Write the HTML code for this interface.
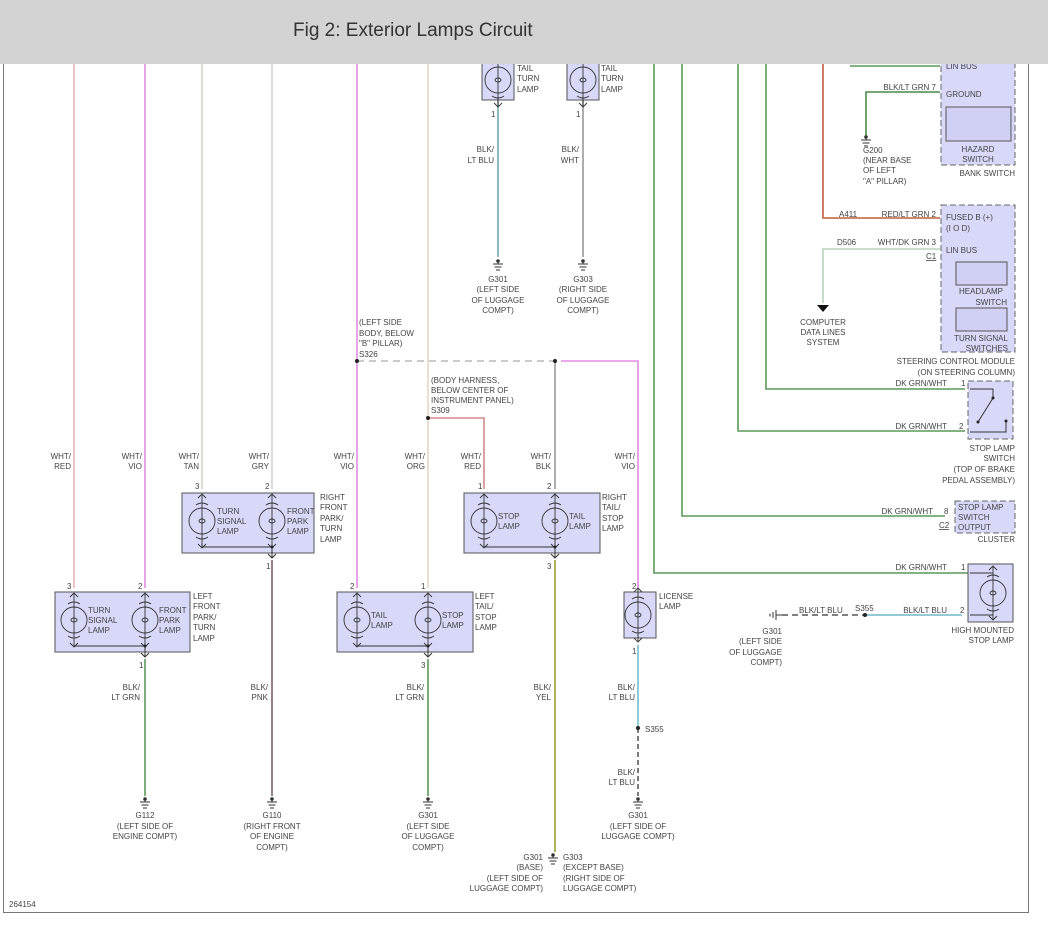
<!DOCTYPE html>
<html><head><meta charset="utf-8"><style>
html,body{margin:0;padding:0;background:#fff;}
svg{display:block;}
text{font-family:"Liberation Sans",sans-serif;font-size:8px;fill:#444;}
.r{text-anchor:end;}.c{text-anchor:middle;}
</style></head><body>
<svg width="1048" height="932" viewBox="0 0 1048 932" xmlns="http://www.w3.org/2000/svg">
<defs>
<g id="lamp" fill="none" stroke="#333" stroke-width="0.9">
<circle r="13"/>
<path d="M0,-27V27M-4,-23L0,-27L4,-23M-4,23L0,27L4,23M-6,-16Q0,-20 6,-16M-6,16Q0,20 6,16"/>
<ellipse rx="3" ry="2"/>
</g>
<g id="gnd" stroke="#333" stroke-width="1"><path d="M-5,0H5M-3.5,3H3.5M-2,6H2M0,-4V0"/><circle cy="-3" r="1.3" fill="#333"/></g>
</defs>
<rect width="1048" height="932" fill="#fff"/>
<!-- border -->
<path d="M3.5,60V912.5H1028.5V60" fill="none" stroke="#777" stroke-width="1"/>

<!-- vertical wires left -->
<g fill="none" stroke-width="1.6">
<path d="M74,60V588" stroke="#e8b8b8"/>
<path d="M145,60V588" stroke="#e08ee0"/>
<path d="M202,60V489" stroke="#d8d2cc"/>
<path d="M272,60V489" stroke="#d4d4d4"/>
<path d="M357,60V588" stroke="#e08ee0"/>
<path d="M428,60V588" stroke="#e6d6c6"/>
<path d="M498,100V257" stroke="#6fa8b0"/>
<path d="M583,100V257" stroke="#999"/>
<path d="M654,60V573H968" stroke="#5a9a5a"/>
<path d="M682,60V516H945" stroke="#5a9a5a"/>
<path d="M738,60V431H965" stroke="#5a9a5a"/>
<path d="M766,60V389H965" stroke="#5a9a5a"/>
<path d="M823,60V218H940" stroke="#c0603a"/>
<path d="M850,66H940" stroke="#5a9a5a"/>
<path d="M940,92H866V136" stroke="#4a8a4a"/>
<path d="M940,249H823V303" stroke="#b8d4b8"/>
<path d="M555,361V489" stroke="#999"/>
<path d="M428,418H484V489" stroke="#d08a8a"/>
<path d="M561,361H638V589" stroke="#e08ee0"/>
<path d="M272,560V796" stroke="#806070"/>
<path d="M555,560V852" stroke="#a0a030"/>
<path d="M145,659V796" stroke="#5a9a5a"/>
<path d="M428,659V796" stroke="#5a9a5a"/>
<path d="M638,645V728" stroke="#6fc0d0"/>
<path d="M865,615H962" stroke="#6fb8c8"/>
</g>
<path d="M357,361H555" stroke="#aaa" stroke-width="1.2" stroke-dasharray="7,5"/>
<path d="M638,728V796" stroke="#444" stroke-width="1.4" stroke-dasharray="5,3"/>
<path d="M782,615H865" stroke="#555" stroke-width="1.4" stroke-dasharray="6,4"/>
<g fill="#222"><circle cx="357" cy="361" r="2"/><circle cx="555" cy="361" r="2"/><circle cx="428" cy="418" r="2"/><circle cx="638" cy="728" r="2"/><circle cx="865" cy="615" r="2"/></g>
<path d="M817,305H829L823,312Z" fill="#111"/>
<!-- G301 horizontal ground -->
<g stroke="#333"><path d="M776,610V620M773,612V618M770,613.5V616.5M776,615H782"/></g>

<!-- top lamp boxes -->
<rect x="482" y="55" width="32" height="45" fill="#d8d8f8" stroke="#555"/>
<rect x="567" y="55" width="32" height="45" fill="#d8d8f8" stroke="#555"/>
<use href="#lamp" x="498" y="80"/><use href="#lamp" x="583" y="80"/>

<!-- right front box -->
<rect x="182" y="493" width="132" height="60" fill="#d8d8f8" stroke="#555"/>
<use href="#lamp" x="202" y="521"/><use href="#lamp" x="272" y="521"/>
<path d="M202,544V547H272M272,544V558M268,554L272,558L276,554" fill="none" stroke="#333"/><circle cx="272" cy="547" r="1.5" fill="#222"/>
<!-- right tail stop -->
<rect x="464" y="493" width="136" height="60" fill="#d8d8f8" stroke="#555"/>
<use href="#lamp" x="484" y="521"/><use href="#lamp" x="555" y="521"/>
<path d="M484,544V547H555M555,544V558M551,554L555,558L559,554" fill="none" stroke="#333"/><circle cx="555" cy="547" r="1.5" fill="#222"/>
<!-- left front -->
<rect x="55" y="592" width="135" height="60" fill="#d8d8f8" stroke="#555"/>
<use href="#lamp" x="74" y="620"/><use href="#lamp" x="145" y="620"/>
<path d="M74,643V646H145M145,643V657M141,653L145,657L149,653" fill="none" stroke="#333"/><circle cx="145" cy="646" r="1.5" fill="#222"/>
<!-- left tail stop -->
<rect x="337" y="592" width="136" height="60" fill="#d8d8f8" stroke="#555"/>
<use href="#lamp" x="357" y="620"/><use href="#lamp" x="428" y="620"/>
<path d="M357,643V646H428M428,643V657M424,653L428,657L432,653" fill="none" stroke="#333"/><circle cx="428" cy="646" r="1.5" fill="#222"/>
<!-- license -->
<rect x="624" y="592" width="32" height="46" fill="#d8d8f8" stroke="#555"/>
<use href="#lamp" x="638" y="615"/>

<!-- right side modules -->
<rect x="941" y="55" width="74" height="110" fill="#d8d8f8" stroke="#666" stroke-dasharray="6,3"/>
<rect x="946" y="107" width="65" height="34" fill="#d0d0f4" stroke="#555"/>
<rect x="941" y="205" width="74" height="147" fill="#d8d8f8" stroke="#666" stroke-dasharray="6,3"/>
<rect x="956" y="262" width="51" height="23" fill="#d0d0f4" stroke="#555"/>
<rect x="956" y="308" width="51" height="23" fill="#d0d0f4" stroke="#555"/>
<rect x="968" y="381" width="45" height="58" fill="#d8d8f8" stroke="#666" stroke-dasharray="6,3"/>
<path d="M970,389H993V398L978,422M1006,421V432H970" fill="none" stroke="#333"/><circle cx="978" cy="422" r="1.5" fill="#222"/><circle cx="1006" cy="421" r="1.5" fill="#222"/><circle cx="993" cy="398" r="1.5" fill="#222"/>
<rect x="955" y="501" width="60" height="32" fill="#d8d8f8" stroke="#666" stroke-dasharray="6,3"/>
<rect x="968" y="564" width="45" height="58" fill="#d8d8f8" stroke="#555"/>
<use href="#lamp" x="993" y="593"/>
<path d="M970,573H993M970,615H993" fill="none" stroke="#333"/>

<!-- grounds -->
<use href="#gnd" x="498" y="264"/><use href="#gnd" x="583" y="264"/><use href="#gnd" x="866" y="140"/>
<use href="#gnd" x="145" y="802"/><use href="#gnd" x="272" y="802"/><use href="#gnd" x="428" y="802"/><use href="#gnd" x="638" y="802"/><use href="#gnd" x="553" y="858"/>

<!-- text -->
<text x="517" y="71">TAIL</text><text x="517" y="81">TURN</text><text x="517" y="92">LAMP</text>
<text x="601" y="71">TAIL</text><text x="601" y="81">TURN</text><text x="601" y="92">LAMP</text>
<text x="491" y="117">1</text><text x="576" y="117">1</text>
<text class="r" x="494" y="152">BLK/</text><text class="r" x="494" y="163">LT BLU</text>
<text class="r" x="579" y="152">BLK/</text><text class="r" x="579" y="163">WHT</text>
<g class="c"><text class="c" x="498" y="282">G301</text><text class="c" x="498" y="292">(LEFT SIDE</text><text class="c" x="498" y="303">OF LUGGAGE</text><text class="c" x="498" y="313">COMPT)</text>
<text class="c" x="583" y="282">G303</text><text class="c" x="583" y="292">(RIGHT SIDE</text><text class="c" x="583" y="303">OF LUGGAGE</text><text class="c" x="583" y="313">COMPT)</text></g>
<text x="359" y="325">(LEFT SIDE</text><text x="359" y="336">BODY, BELOW</text><text x="359" y="346">"B" PILLAR)</text><text x="359" y="357">S326</text>
<text x="431" y="383">(BODY HARNESS,</text><text x="431" y="393">BELOW CENTER OF</text><text x="431" y="403">INSTRUMENT PANEL)</text><text x="431" y="413">S309</text>
<g>
<text class="r" x="71" y="459">WHT/</text><text class="r" x="71" y="469">RED</text>
<text class="r" x="142" y="459">WHT/</text><text class="r" x="142" y="469">VIO</text>
<text class="r" x="199" y="459">WHT/</text><text class="r" x="199" y="469">TAN</text>
<text class="r" x="269" y="459">WHT/</text><text class="r" x="269" y="469">GRY</text>
<text class="r" x="354" y="459">WHT/</text><text class="r" x="354" y="469">VIO</text>
<text class="r" x="425" y="459">WHT/</text><text class="r" x="425" y="469">ORG</text>
<text class="r" x="481" y="459">WHT/</text><text class="r" x="481" y="469">RED</text>
<text class="r" x="551" y="459">WHT/</text><text class="r" x="551" y="469">BLK</text>
<text class="r" x="635" y="459">WHT/</text><text class="r" x="635" y="469">VIO</text>
</g>
<text x="195" y="489">3</text><text x="265" y="489">2</text><text x="478" y="489">1</text><text x="547" y="489">2</text>
<text x="266" y="569">1</text><text x="547" y="569">3</text>
<text x="217" y="514">TURN</text><text x="217" y="524">SIGNAL</text><text x="217" y="534">LAMP</text>
<text x="287" y="514">FRONT</text><text x="287" y="524">PARK</text><text x="287" y="534">LAMP</text>
<text x="320" y="500">RIGHT</text><text x="320" y="510">FRONT</text><text x="320" y="521">PARK/</text><text x="320" y="531">TURN</text><text x="320" y="542">LAMP</text>
<text x="498" y="519">STOP</text><text x="498" y="529">LAMP</text>
<text x="569" y="519">TAIL</text><text x="569" y="529">LAMP</text>
<text x="602" y="500">RIGHT</text><text x="602" y="510">TAIL/</text><text x="602" y="521">STOP</text><text x="602" y="531">LAMP</text>
<text x="67" y="589">3</text><text x="138" y="589">2</text><text x="350" y="589">2</text><text x="421" y="589">1</text><text x="632" y="589">2</text>
<text x="139" y="668">1</text><text x="421" y="668">3</text><text x="632" y="654">1</text>
<text x="88" y="613">TURN</text><text x="88" y="623">SIGNAL</text><text x="88" y="633">LAMP</text>
<text x="159" y="613">FRONT</text><text x="159" y="623">PARK</text><text x="159" y="633">LAMP</text>
<text x="193" y="599">LEFT</text><text x="193" y="609">FRONT</text><text x="193" y="620">PARK/</text><text x="193" y="630">TURN</text><text x="193" y="641">LAMP</text>
<text x="371" y="618">TAIL</text><text x="371" y="628">LAMP</text>
<text x="442" y="618">STOP</text><text x="442" y="628">LAMP</text>
<text x="475" y="599">LEFT</text><text x="475" y="609">TAIL/</text><text x="475" y="620">STOP</text><text x="475" y="630">LAMP</text>
<text x="659" y="599">LICENSE</text><text x="659" y="609">LAMP</text>
<text class="r" x="140" y="690">BLK/</text><text class="r" x="140" y="700">LT GRN</text>
<text class="r" x="268" y="690">BLK/</text><text class="r" x="268" y="700">PNK</text>
<text class="r" x="424" y="690">BLK/</text><text class="r" x="424" y="700">LT GRN</text>
<text class="r" x="551" y="690">BLK/</text><text class="r" x="551" y="700">YEL</text>
<text class="r" x="635" y="690">BLK/</text><text class="r" x="635" y="700">LT BLU</text>
<text x="645" y="732">S355</text>
<text class="r" x="635" y="775">BLK/</text><text class="r" x="635" y="785">LT BLU</text>
<text class="c" x="145" y="818">G112</text><text class="c" x="145" y="829">(LEFT SIDE OF</text><text class="c" x="145" y="839">ENGINE COMPT)</text>
<text class="c" x="272" y="818">G110</text><text class="c" x="272" y="829">(RIGHT FRONT</text><text class="c" x="272" y="839">OF ENGINE</text><text class="c" x="272" y="850">COMPT)</text>
<text class="c" x="428" y="818">G301</text><text class="c" x="428" y="829">(LEFT SIDE</text><text class="c" x="428" y="839">OF LUGGAGE</text><text class="c" x="428" y="850">COMPT)</text>
<text class="c" x="638" y="818">G301</text><text class="c" x="638" y="829">(LEFT SIDE OF</text><text class="c" x="638" y="839">LUGGAGE COMPT)</text>
<text class="r" x="543" y="860">G301</text><text class="r" x="543" y="870">(BASE)</text><text class="r" x="543" y="881">(LEFT SIDE OF</text><text class="r" x="543" y="891">LUGGAGE COMPT)</text>
<text x="563" y="860">G303</text><text x="563" y="870">(EXCEPT BASE)</text><text x="563" y="881">(RIGHT SIDE OF</text><text x="563" y="891">LUGGAGE COMPT)</text>
<text x="9" y="907">264154</text>

<text x="946" y="69">LIN BUS</text>
<text class="r" x="936" y="90">BLK/LT GRN 7</text><text x="946" y="97">GROUND</text>
<text class="c" x="978" y="152">HAZARD</text><text class="c" x="978" y="162">SWITCH</text>
<text class="r" x="1015" y="176">BANK SWITCH</text>
<text x="863" y="153">G200</text><text x="863" y="163">(NEAR BASE</text><text x="863" y="173">OF LEFT</text><text x="863" y="184">"A" PILLAR)</text>
<text x="839" y="217">A411</text><text class="r" x="936" y="217">RED/LT GRN 2</text>
<text x="946" y="220">FUSED B (+)</text><text x="946" y="231">(I O D)</text>
<text x="837" y="245">D506</text><text class="r" x="936" y="245">WHT/DK GRN 3</text>
<text x="926" y="259" text-decoration="underline">C1</text><text x="946" y="253">LIN BUS</text>
<text class="c" x="981" y="294">HEADLAMP</text><text class="r" x="1007" y="305">SWITCH</text>
<text class="c" x="981" y="341">TURN SIGNAL</text><text class="r" x="1008" y="351">SWITCHES</text>
<text class="r" x="1015" y="364">STEERING CONTROL MODULE</text><text class="r" x="1015" y="375">(ON STEERING COLUMN)</text>
<text class="c" x="823" y="325">COMPUTER</text><text class="c" x="823" y="335">DATA LINES</text><text class="c" x="823" y="345">SYSTEM</text>
<text class="r" x="947" y="386">DK GRN/WHT</text><text x="961" y="386">1</text>
<text class="r" x="947" y="429">DK GRN/WHT</text><text x="959" y="429">2</text>
<text class="r" x="1015" y="451">STOP LAMP</text><text class="r" x="1015" y="461">SWITCH</text><text class="r" x="1015" y="472">(TOP OF BRAKE</text><text class="r" x="1015" y="483">PEDAL ASSEMBLY)</text>
<text class="r" x="933" y="514">DK GRN/WHT</text><text x="944" y="514">8</text><text x="939" y="528" text-decoration="underline">C2</text>
<text x="958" y="510">STOP LAMP</text><text x="958" y="520">SWITCH</text><text x="958" y="530">OUTPUT</text>
<text class="r" x="1015" y="542">CLUSTER</text>
<text class="r" x="947" y="570">DK GRN/WHT</text><text x="961" y="570">1</text>
<text class="r" x="947" y="613">BLK/LT BLU</text><text x="960" y="613">2</text>
<text x="855" y="611">S355</text><text x="799" y="613">BLK/LT BLU</text>
<text class="r" x="782" y="634">G301</text><text class="r" x="782" y="644">(LEFT SIDE</text><text class="r" x="782" y="655">OF LUGGAGE</text><text class="r" x="782" y="665">COMPT)</text>
<text class="r" x="1014" y="633">HIGH MOUNTED</text><text class="r" x="1014" y="643">STOP LAMP</text>

<!-- header -->
<rect x="0" y="0" width="1048" height="64" fill="#d3d3d3"/>
<text x="293" y="36" style="font-size:19px;fill:#333;">Fig 2: Exterior Lamps Circuit</text>
</svg>
</body></html>
